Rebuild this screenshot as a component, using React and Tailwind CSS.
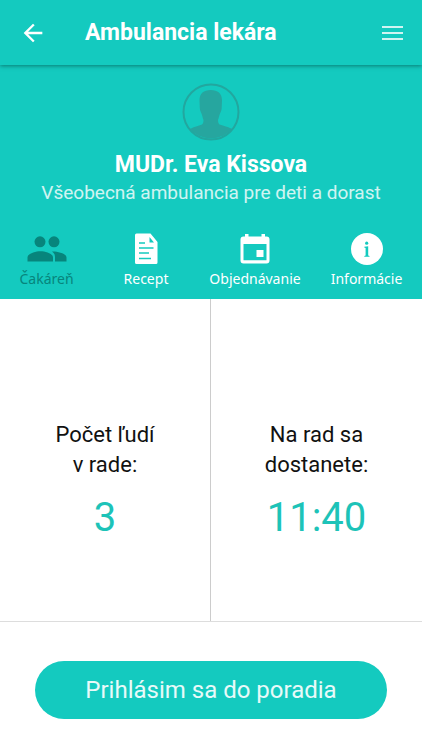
import { MdArrowBack } from "react-icons/md";

const tabs = [
  { name: "Čakáreň", icon: PeopleIcon, active: true },
  { name: "Recept", icon: RecipeIcon },
  { name: "Objednávanie", icon: CalendarIcon },
  { name: "Informácie", icon: InfoIcon },
];

const stats = [
  { label: ["Počet ľudí", "v rade:"], value: "3" },
  { label: ["Na rad sa", "dostanete:"], value: "11:40" },
];

function PeopleIcon() {
  return (
    <svg viewBox="0 0 40 26" className="w-10 h-[26px]" fill="currentColor">
      <circle cx="13" cy="5.8" r="5.5" />
      <circle cx="27" cy="5.8" r="5.5" />
      <path d="M.5 25.5v-4c0-4 8-6.300 13-6.300s12.500 2.300 12.500 6.300v4z" />
      <path d="M26 15.500c5 0 13.500 2 13.500 6v4h-11.500v-4.500c0-2.300-1-4-3-5.400z" />
    </svg>
  );
}

function RecipeIcon() {
  return (
    <svg viewBox="0 0 24 32" className="w-6 h-8">
      <path
        fill="currentColor"
        d="M2.500 .500h14l7 8.500v20.500a1.500 1.500 0 0 1-1.500 1.500H2.500a1.500 1.500 0 0 1-1.500-1.500V2A1.500 1.500 0 0 1 2.500 .500z"
      />
      <path fill="#14cabf" d="M15.500 4v5.500h4.500z" />
      <path
        stroke="#14cabf"
        strokeWidth="1.300"
        d="M5 10h6M5 15h14.500M5 20h10M5 25.500h12"
      />
    </svg>
  );
}

function CalendarIcon() {
  return (
    <svg viewBox="0 0 30 32" className="w-[30px] h-8" fill="currentColor">
      <rect x="5" y="1" width="3.500" height="5" />
      <rect x="21.500" y="1" width="3.500" height="5" />
      <path
        fillRule="evenodd"
        d="M3.500 3.500h23a3 3 0 0 1 3 3v21a3 3 0 0 1-3 3h-23a3 3 0 0 1-3-3v-21a3 3 0 0 1 3-3zM3.500 11v16.300h23V11z"
      />
      <rect x="16.500" y="17" width="7" height="7" />
    </svg>
  );
}

function InfoIcon() {
  return (
    <svg viewBox="0 0 32 32" className="size-8">
      <circle cx="16" cy="16" r="16" fill="currentColor" />
      <g fill="#14cabf">
        <circle cx="15.700" cy="10.200" r="1.600" />
        <path d="M13.300 13.700l3.900-.5v9.300l1.300.4v.8h-5.200v-.8l1.300-.4v-7.500l-1.300-.5z" />
      </g>
    </svg>
  );
}

function Avatar() {
  return (
    <svg viewBox="0 0 58 58" className="size-[58px]">
      <circle cx="29" cy="29" r="27.500" fill="none" stroke="#22a79f" strokeWidth="2" />
      <path
        fill="#26a69f"
        d="M28.700 7c7 0 11.300 3.500 11.300 10l-.3 8c-.1 3-1.500 4.500-2.200 7-.5 2-.8 3-1.500 5 0 2 .5 4 1.500 4.500 3 1.200 7.500 1.800 12.500 4.500A28 28 0 0 1 8 46c5-2.700 9.500-3.300 12-4.500 1-.5 1.500-2.500 1.500-4.500-.7-2-1-3-1.500-5-.7-2.500-2.100-4-2.200-7l-.3-8c0-6.500 4.200-10 11.200-10z"
      />
    </svg>
  );
}

function Header() {
  return (
    <header className="relative flex h-[65px] items-center bg-[#14cabf] px-[19px] shadow-[0_1px_4px_rgba(0,70,65,0.6)]">
      <button type="button" aria-label="Späť" className="w-[66px]">
        <MdArrowBack className="size-7" />
      </button>
      <h1 className="flex-1 text-[23px] leading-8 font-bold">Ambulancia lekára</h1>
      <button type="button" aria-label="Menu" className="flex w-[21px] flex-col gap-1">
        <span className="h-0.5 w-full bg-white/80" />
        <span className="h-0.5 w-full bg-white/80" />
        <span className="h-0.5 w-full bg-white/80" />
      </button>
    </header>
  );
}

function Stat({ label, value }) {
  return (
    <div className="flex flex-col items-center justify-center pt-11 text-center">
      <p className="text-[22px] leading-[30px] text-[#111]">
        {label[0]}
        <br />
        {label[1]}
      </p>
      <p className="mt-3 text-[40px] leading-[52px] text-[#1dc3b8]">{value}</p>
    </div>
  );
}

export default function App() {
  return (
    <div className="flex min-h-screen flex-col bg-white font-['Roboto',sans-serif]">
      <div className="bg-[#14cabf] text-white">
        <Header />
        <section className="flex flex-col items-center pt-[18px]">
          <Avatar />
          <h2 className="mt-2 text-[23px] leading-8 font-bold">MUDr. Eva Kissova</h2>
          <p className="text-[19px] leading-6 text-white/80">
            Všeobecná ambulancia pre deti a dorast
          </p>
        </section>
        <nav className="mt-6 grid grid-cols-[93fr_106fr_112fr_111fr] pb-[10px]">
          {tabs.map(({ name, icon: Icon, active }) => (
            <button
              key={name}
              type="button"
              className={
                active
                  ? "flex flex-col items-center text-[#07857c]"
                  : "flex flex-col items-center"
              }>
              <span className="flex h-10 items-center">
                <Icon />
              </span>
              <span className="font-['Noto_Sans',sans-serif] text-sm">{name}</span>
            </button>
          ))}
        </nav>
      </div>

      <main className="grid flex-1 grid-cols-2 divide-x divide-[#ccc] border-b border-[#ddd]">
        {stats.map((stat) => (
          <Stat key={stat.value} label={stat.label} value={stat.value} />
        ))}
      </main>

      <footer className="px-[35px] pt-[39px] pb-[31px]">
        <button
          type="button"
          className="h-[58px] w-full rounded-full bg-[#14cabf] text-2xl text-white/90">
          Prihlásim sa do poradia
        </button>
      </footer>
    </div>
  );
}
